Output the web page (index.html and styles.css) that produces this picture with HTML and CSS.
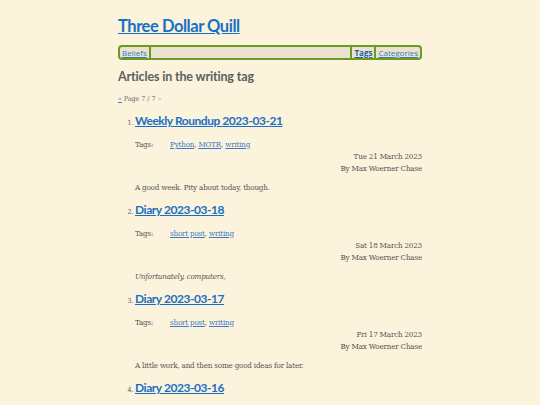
FILE: index.html
```html
<!DOCTYPE html>
<html lang="en">
<head>
<meta charset="utf-8">
<title>Articles in the writing tag</title>
<link rel="stylesheet" href="styles.css">
</head>
<body>
<div class="page">
  <header class="site-header">
    <h1 class="site-title"><a href="#">Three Dollar Quill</a></h1>
    <nav class="nav">
      <a class="nav-item" href="#">Beliefs</a>
      <span class="nav-fill"></span>
      <a class="nav-item nav-current" href="#">Tags</a>
      <a class="nav-item nav-last" href="#">Categories</a>
    </nav>
  </header>
  <main>
    <h2 class="page-heading">Articles in the writing tag</h2>
    <p class="pager"><a href="#">«</a> Page 7 / 7 <span class="pager-off">»</span></p>
    <ol class="articles" start="1">
      <li class="article">
        <h3 class="article-title"><a href="#">Weekly Roundup 2023-03-21</a></h3>
        <div class="tags"><span class="tags-label">Tags:</span><span><a href="#">Python</a>, <a href="#">MOTR</a>, <a href="#">writing</a></span></div>
        <p class="meta">Tue 21 March 2023</p>
        <p class="meta">By Max Woerner Chase</p>
        <p class="summary">A good week. Pity about today, though.</p>
      </li>
      <li class="article">
        <h3 class="article-title"><a href="#">Diary 2023-03-18</a></h3>
        <div class="tags"><span class="tags-label">Tags:</span><span><a href="#">short post</a>, <a href="#">writing</a></span></div>
        <p class="meta">Sat 18 March 2023</p>
        <p class="meta">By Max Woerner Chase</p>
        <p class="summary"><em>Unfortunately, computers,</em></p>
      </li>
      <li class="article">
        <h3 class="article-title"><a href="#">Diary 2023-03-17</a></h3>
        <div class="tags"><span class="tags-label">Tags:</span><span><a href="#">short post</a>, <a href="#">writing</a></span></div>
        <p class="meta">Fri 17 March 2023</p>
        <p class="meta">By Max Woerner Chase</p>
        <p class="summary">A little work, and then some good ideas for later.</p>
      </li>
      <li class="article">
        <h3 class="article-title"><a href="#">Diary 2023-03-16</a></h3>
        <div class="tags"><span class="tags-label">Tags:</span><span><a href="#">short post</a>, <a href="#">writing</a></span></div>
        <p class="meta">Thu 16 March 2023</p>
        <p class="meta">By Max Woerner Chase</p>
        <p class="summary">More work.</p>
      </li>
    </ol>
  </main>
</div>
</body>
</html>
```
FILE: styles.css
```css
html, body {
  margin: 0;
  padding: 0;
  background: #fbf3dc;
}
body {
  font-family: "DejaVu Serif Condensed", "DejaVu Serif", serif;
  font-size: 8px;
  letter-spacing: -0.2px;
  color: #555;
}
a {
  color: #1c6fc0;
}
.page {
  width: 304px;
  margin: 0 auto;
  padding-top: 15px;
}
.site-title {
  margin: 0;
  font-family: Lato, sans-serif;
  font-size: 16.5px;
  font-weight: 700;
  letter-spacing: -0.45px;
  line-height: 22px;
}
.site-title a {
  color: #1a6fc4;
}
.nav {
  margin-top: 8px;
  display: flex;
  align-items: stretch;
  height: 11px;
  border: 2px solid #6b9b21;
  border-radius: 4px;
  background: #ebe3cf;
  font-family: "Open Sans", sans-serif;
  font-size: 8px;
  letter-spacing: 0;
  line-height: 11px;
}
.nav-item {
  padding: 0 2px;
  border-right: 2px solid #6b9b21;
  color: #3a79c0;
}
.nav-fill {
  flex: 1;
  border-right: 2px solid #6b9b21;
}
.nav-current {
  font-weight: 700;
  color: #1c62a8;
}
.nav-last {
  border-right: none;
}
main {
  margin-top: 8px;
}
.page-heading {
  margin: 0;
  font-family: Lato, sans-serif;
  font-size: 12.5px;
  font-weight: 700;
  letter-spacing: -0.15px;
  line-height: 18px;
  color: #5b6060;
}
.pager {
  margin: 7px 0 0;
  line-height: 12px;
  color: #666;
  font-size: 7px;
  letter-spacing: 0;
}
.pager a {
  color: #3a79c0;
}
.pager-off {
  color: #aaa;
}
.articles {
  margin: 8px 0 0;
  padding-left: 17px;
}
.article {
  padding-bottom: 8px;
}
.article::marker {
  font-size: 7px;
  color: #555;
}
.article-title {
  margin: 0;
  font-family: Lato, sans-serif;
  font-size: 12px;
  font-weight: 700;
  letter-spacing: -0.45px;
  line-height: 16px;
}
.article-title a {
  color: #1a6fc4;
}
.tags {
  display: flex;
  margin-top: 10px;
  line-height: 12px;
}
.tags-label {
  width: 35px;
}
.tags a {
  color: #3a7bc8;
}
.meta {
  margin: 0;
  text-align: right;
  line-height: 12px;
}
.summary {
  margin: 7px 0 0;
  line-height: 12px;
}
```
